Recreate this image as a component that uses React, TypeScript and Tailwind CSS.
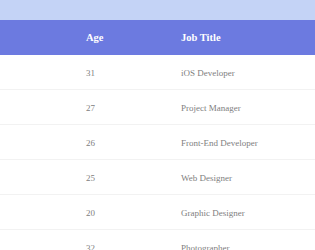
const rows = [
  { age: "31", job: "iOS Developer" },
  { age: "27", job: "Project Manager" },
  { age: "26", job: "Front-End Developer" },
  { age: "25", job: "Web Designer" },
  { age: "20", job: "Graphic Designer" },
  { age: "32", job: "Photographer" },
]

export default function App() {
  return (
    <div className="w-[315px] h-[250px] overflow-hidden bg-[#c4d3f6] pt-[20px] [font-family:'Liberation_Serif',serif]">
      <div className="grid grid-cols-[86px_95px_1fr] h-[35px] items-center bg-[#6c7ae0] text-white text-[10.5px] font-bold">
        <div />
        <div>Age</div>
        <div>Job Title</div>
      </div>
      <div className="bg-white">
        {rows.map((r) => (
          <div
            key={r.age + r.job}
            className="grid grid-cols-[86px_95px_1fr] h-[35px] pt-[3px] items-center border-b border-[#f2f2f2] text-[9px] text-[#808080]"
          >
            <div />
            <div>{r.age}</div>
            <div>{r.job}</div>
          </div>
        ))}
      </div>
    </div>
  )
}
